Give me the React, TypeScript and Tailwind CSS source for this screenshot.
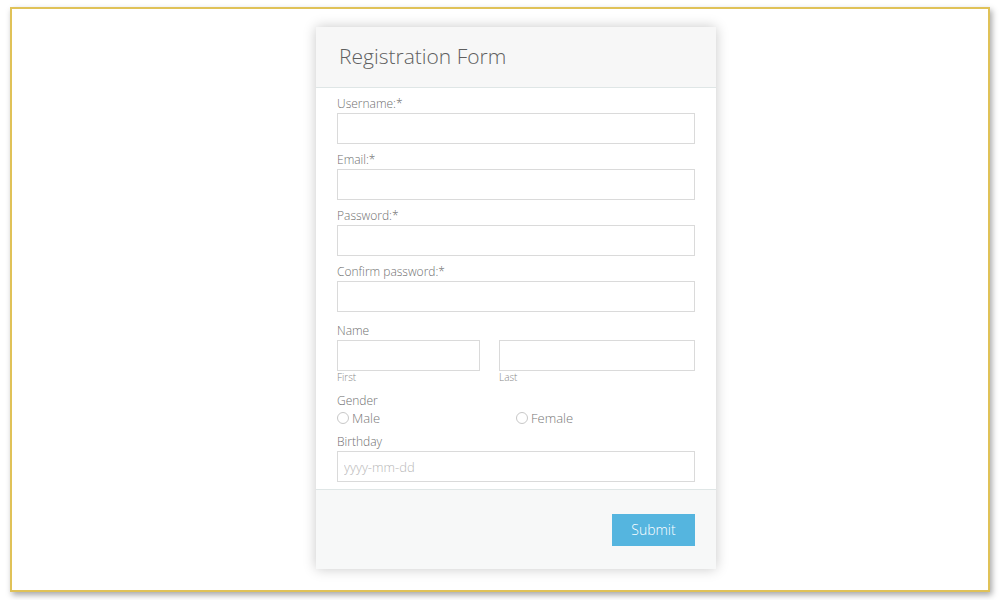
import React from "react";

const font = { fontFamily: '"Open Sans", "Liberation Sans", sans-serif' };

function Field({ label, placeholder, type = "text" }: { label: string; placeholder?: string; type?: string }) {
  return (
    <div className="mb-[6px]">
      <label className="block h-[19px] text-[12px] leading-[19px] text-[#6f6f6f]">{label}</label>
      <input
        type={type}
        placeholder={placeholder}
        className="block h-[31px] w-full border border-[#dadada] bg-white px-[6px] text-[13px] text-[#555] outline-none placeholder:text-[#b8b8b8]"
      />
    </div>
  );
}

function Radio({ label }: { label: string }) {
  return (
    <label className="flex items-center gap-[3px] text-[13px] leading-[16px] text-[#777]">
      <span className="inline-block h-[12px] w-[12px] rounded-full border border-[#c8c8c8] bg-white" />
      {label}
    </label>
  );
}

export default function App() {
  return (
    <div className="h-[600px] w-[1000px] overflow-hidden bg-white pl-[10px] pt-[7px] font-light" style={font}>
      <div className="h-[585px] w-[980px] border-2 border-[#e0c258] bg-white pl-[304px] pt-[18px] shadow-[2px_3px_6px_rgba(0,0,0,0.35)]">
        <div className="w-[400px] bg-white shadow-[0_0_12px_rgba(0,0,0,0.22)]">
          <div className="flex h-[61px] items-center border-b border-[#dfe6e6] bg-[#f7f7f7] px-[23px]">
            <h1 className="text-[21px] font-light text-[#5f5f5f]">Registration Form</h1>
          </div>
          <div className="px-[21px] pt-[6px] pb-[7px]">
            <Field label="Username:*" />
            <Field label="Email:*" type="email" />
            <Field label="Password:*" type="password" />
            <Field label="Confirm password:*" type="password" />

            <div className="pt-[3px]">
              <label className="block h-[19px] text-[12px] leading-[19px] text-[#6f6f6f]">Name</label>
              <div className="flex gap-[19px]">
                <div className="w-[143px]">
                  <input className="block h-[31px] w-full border border-[#dadada] px-[6px] text-[13px] outline-none" />
                  <span className="block text-[10px] leading-[13px] text-[#888]">First</span>
                </div>
                <div className="flex-1">
                  <input className="block h-[31px] w-full border border-[#dadada] px-[6px] text-[13px] outline-none" />
                  <span className="block text-[10px] leading-[13px] text-[#888]">Last</span>
                </div>
              </div>
            </div>

            <div className="mt-[7px]">
              <label className="block h-[19px] text-[12px] leading-[19px] text-[#6f6f6f]">Gender</label>
              <div className="grid grid-cols-2">
                <Radio label="Male" />
                <Radio label="Female" />
              </div>
            </div>

            <div className="mt-[6px]">
              <label className="block h-[19px] text-[12px] leading-[19px] text-[#6f6f6f]">Birthday</label>
              <input
                placeholder="yyyy-mm-dd"
                className="block h-[31px] w-full border border-[#dadada] px-[6px] text-[13px] outline-none placeholder:text-[#b8b8b8]"
              />
            </div>
          </div>
          <div className="flex h-[80px] items-center justify-end border-t border-[#dfe6e6] bg-[#f7f8f8] px-[21px]">
            <button type="button" className="h-[32px] w-[83px] bg-[#55b5df] text-[14px] font-light text-white">
              Submit
            </button>
          </div>
        </div>
      </div>
    </div>
  );
}
